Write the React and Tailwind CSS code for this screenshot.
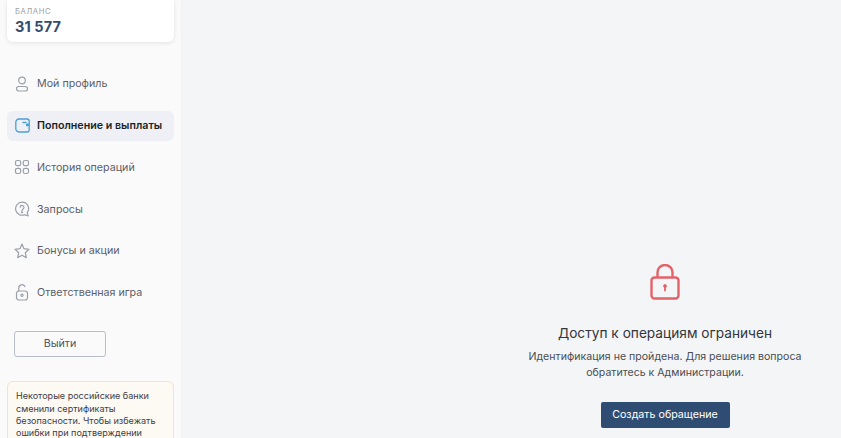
import React from 'react'

const items = [
  { label: 'Мой профиль', icon: 'user' },
  { label: 'Пополнение и выплаты', icon: 'wallet', active: true },
  { label: 'История операций', icon: 'grid' },
  { label: 'Запросы', icon: 'question' },
  { label: 'Бонусы и акции', icon: 'star' },
  { label: 'Ответственная игра', icon: 'unlock' },
]

function NavIcon({ name }) {
  const common = { width: 16, height: 18, viewBox: '0 0 16 18', fill: 'none', strokeWidth: 1.2, strokeLinecap: 'round', strokeLinejoin: 'round' }
  if (name === 'user') return (
    <svg {...common} stroke="#9aa0a8">
      <circle cx="8" cy="5.500" r="3.300" />
      <rect x="2.500" y="11.500" width="11" height="4.500" rx="2.250" />
    </svg>
  )
  if (name === 'wallet') return (
    <svg width="15" height="15" viewBox="0 0 15 15" fill="none" stroke="#4b9fd5" strokeWidth="1.300" strokeLinecap="round" strokeLinejoin="round">
      <path d="M4 1h8a2.200 2.200 0 0 1 2.200 2.200v8.600A2.200 2.200 0 0 1 12 14H4a3.200 3.200 0 0 1-3.200-3.200V4.200A3.200 3.200 0 0 1 4 1z" />
      <path d="M8 4.500h3" />
      <circle cx="12.500" cy="6.800" r="1" fill="#4b9fd5" />
    </svg>
  )
  if (name === 'grid') return (
    <svg {...common} stroke="#9aa0a8">
      <rect x="1.500" y="2.500" width="5.200" height="5.200" rx="1.800" />
      <rect x="9.300" y="2.500" width="5.200" height="5.200" rx="1.800" />
      <rect x="1.500" y="10.300" width="5.200" height="5.200" rx="1.800" />
      <rect x="9.300" y="10.300" width="5.200" height="5.200" rx="1.800" />
    </svg>
  )
  if (name === 'question') return (
    <svg {...common} stroke="#9aa0a8">
      <path d="M8 2.200a6.500 6.500 0 1 0 2.600 12.500l3.500 1.200-.9-3.200A6.500 6.500 0 0 0 8 2.200z" />
      <path d="M6.200 7.200a1.900 1.900 0 1 1 2.900 1.700c-.6.400-1 .7-1 1.500" />
      <circle cx="8" cy="12.300" r=".5" fill="#9aa0a8" />
    </svg>
  )
  if (name === 'star') return (
    <svg {...common} stroke="#9aa0a8">
      <path d="M8 2l2 4.700 5 .6-3.700 3.400 1 5L8 13.200l-4.300 2.500 1-5L1 7.300l5-.6z" />
    </svg>
  )
  return (
    <svg {...common} stroke="#9aa0a8">
      <path d="M4.800 8V5a3.200 3.200 0 0 1 6.100-1.400" />
      <rect x="2.500" y="8" width="11" height="9" rx="2.500" />
      <circle cx="8" cy="12.300" r="1.100" />
    </svg>
  )
}

export default function App() {
  return (
    <div className="flex h-[438px] w-[841px] overflow-hidden bg-[#f4f5f7] font-['Inter',sans-serif]">
      <aside className="flex h-full w-[182px] shrink-0 flex-col overflow-hidden border-r border-[#f0f1f4] bg-[#fafafb] px-[7px]">
        <div className="flex h-[42px] shrink-0 flex-col justify-end rounded-b-md bg-white px-[8px] pb-[6px] shadow-[0_1px_4px_rgba(0,0,0,0.1)]">
          <div className="text-[7.700px] leading-[11px] tracking-[0.6px] text-[#9a9ea5]">БАЛАНС</div>
          <div className="text-[14.500px] leading-[19px] font-bold tracking-[0.1px] text-[#344b6e]">31 577</div>
        </div>
        <nav className="mt-[27px] flex shrink-0 flex-col gap-[11.700px]">
          {items.map((item) => (
            <div key={item.label} className={`flex h-[30px] items-center gap-[7px] rounded-md pl-[7px] text-[10.700px] whitespace-nowrap ${item.active ? 'bg-[#eef0f5] font-semibold text-[#1b1f27]' : 'text-[#5c6068]'}`}>
              <span className="flex w-[16px] justify-center"><NavIcon name={item.icon} /></span>
              <span className="pt-px">{item.label}</span>
            </div>
          ))}
        </nav>
        <button className="mt-[24px] ml-[7px] h-[26px] w-[92px] shrink-0 rounded-[3px] border border-[#b7bec8] text-[10.700px] text-[#4a5564]">Выйти</button>
        <div className="mt-[24px] shrink-0 rounded-t-md border border-[#f6e3c4] bg-[#fdf9f3] px-[8px] pt-[8px] pb-[8px] text-[9.050px] leading-[12.300px] text-[#3d4047]">
          Некоторые российские банки сменили сертификаты безопасности. Чтобы избежать ошибки при подтверждении
        </div>
      </aside>
      <main className="flex flex-1 justify-end">
        <div className="flex w-[352px] flex-col items-center pt-[264px]">
          <svg width="30" height="36" viewBox="0 0 30 36" fill="none" stroke="#e26369" strokeWidth="2.400">
            <path d="M7.500 14V8.500a7.500 7.500 0 0 1 15 0V14" />
            <rect x="1.500" y="13.500" width="27" height="21" rx="3" />
            <circle cx="15" cy="22" r="1.500" fill="#e26369" strokeWidth="0.800" />
            <path d="M15 23v3.500" strokeWidth="1.800" strokeLinecap="round" />
          </svg>
          <h1 className="mt-[23px] text-[13.700px] leading-[20px] font-normal text-[#33363b]">Доступ к операциям ограничен</h1>
          <p className="mt-[6px] w-[290px] text-center text-[10.600px] leading-[15.500px] text-[#4a4d53]">Идентификация не пройдена. Для решения вопроса обратитесь к Администрации.</p>
          <button className="mt-[22px] h-[26px] w-[129px] rounded-[2px] bg-[#2f4d73] text-[10.700px] text-white">Создать обращение</button>
        </div>
      </main>
    </div>
  )
}
